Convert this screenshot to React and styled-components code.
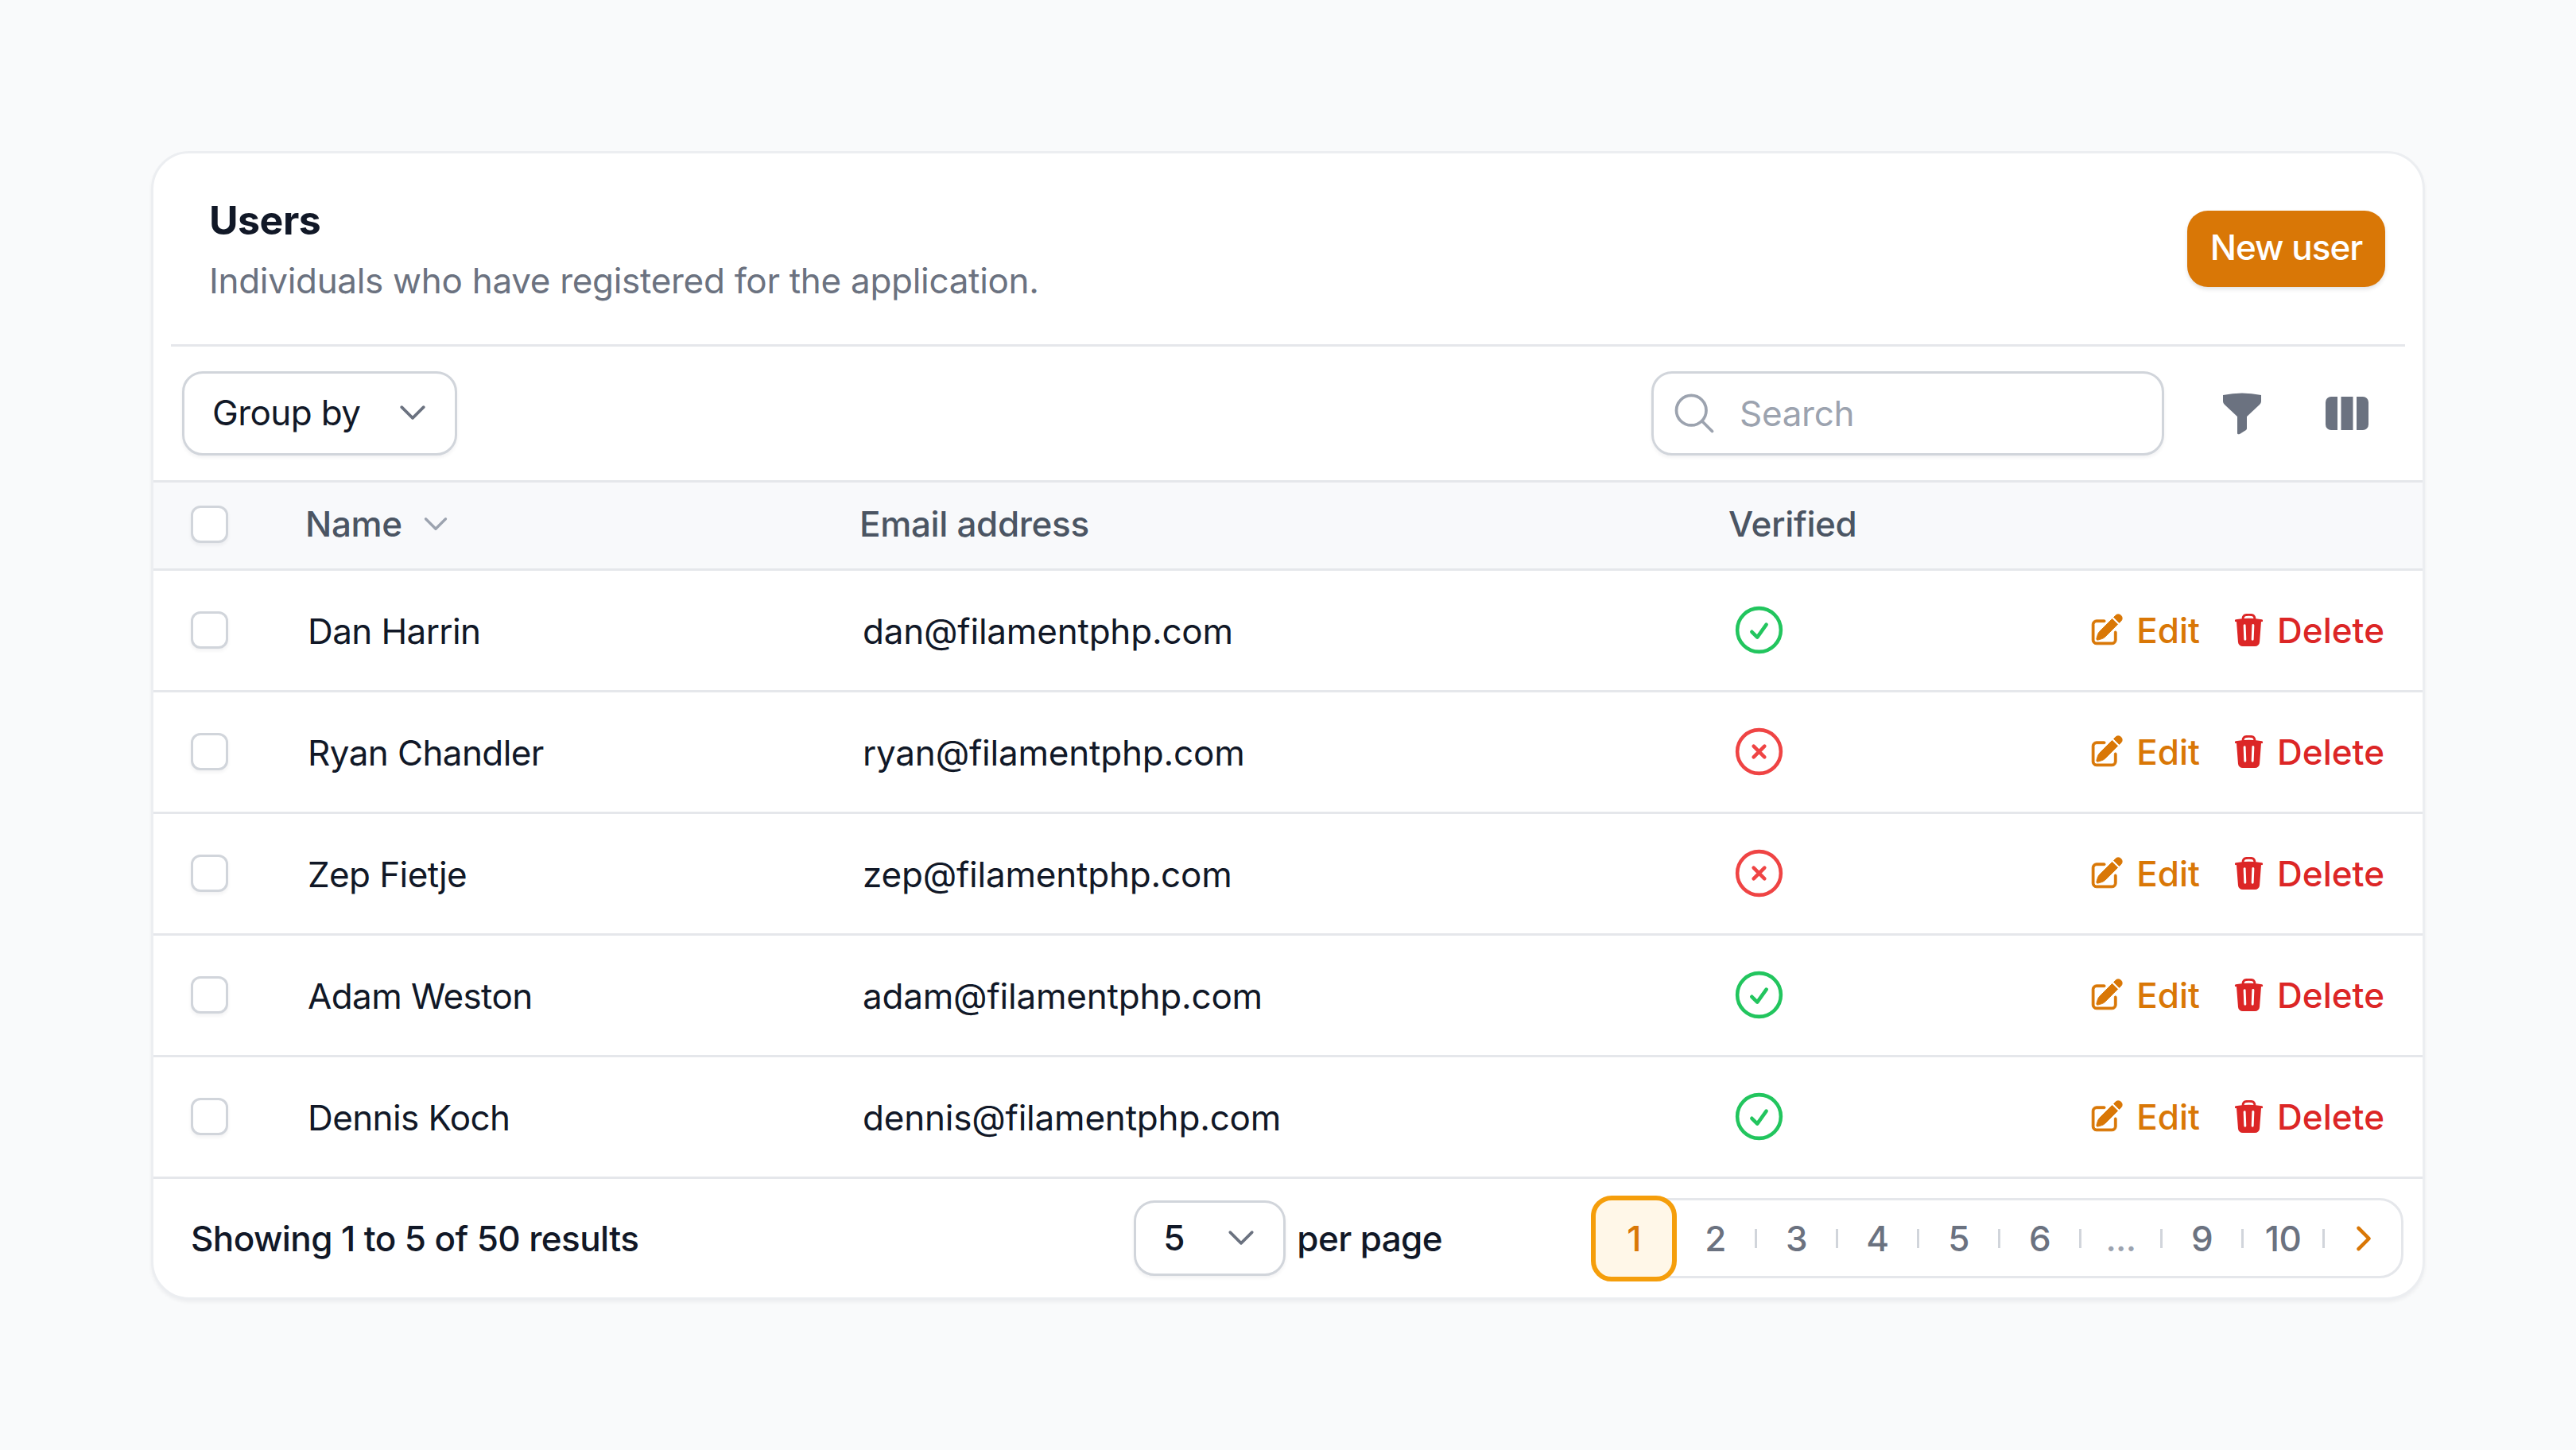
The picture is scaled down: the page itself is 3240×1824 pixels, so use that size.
import React from "react";
import styled, { createGlobalStyle } from "styled-components";

const GlobalStyle = createGlobalStyle`
  * { box-sizing: border-box; }
  body {
    margin: 0;
    background: #f9fafb;
    font-family: "Inter", "Liberation Sans", sans-serif;
    color: #111827;
  }
`;

const Page = styled.div`
  min-height: 100vh;
  display: flex;
  align-items: center;
  justify-content: center;
`;

const Card = styled.section`
  width: 2860px;
  height: 1445px;
  background: #fff;
  border: 3px solid #eceef1;
  border-radius: 48px;
  box-shadow: 0 3px 4px rgba(17, 24, 39, 0.05);
  overflow: hidden;
`;

const Header = styled.header`
  height: 243px;
  margin: 0 22px;
  padding: 0 25px 0 48px;
  border-bottom: 3px solid #e5e7eb;
  display: flex;
  align-items: center;
  justify-content: space-between;
`;

const Title = styled.h1`
  margin: 2px 0 18px;
  font-size: 50px;
  line-height: 60px;
  font-weight: 700;
  letter-spacing: -0.5px;
`;

const Subtitle = styled.p`
  margin: 0;
  font-size: 44px;
  line-height: 56px;
  color: #6b7280;
  letter-spacing: -0.3px;
`;

const PrimaryButton = styled.button`
  width: 249px;
  height: 96px;
  border: none;
  border-radius: 26px;
  background: #d97706;
  color: #fff;
  font: 500 44px/92px "Inter", sans-serif;
  letter-spacing: -1px;
  box-shadow: 0 3px 5px rgba(17, 24, 39, 0.12);
  padding: 0 0 4px;
`;

const Toolbar = styled.div`
  height: 168px;
  padding: 0 68px 0 36px;
  display: flex;
  align-items: center;
`;

const Select = styled.div`
  width: ${(p) => p.$width}px;
  height: ${(p) => p.$height}px;
  padding: 0 ${(p) => p.$right}px 2px ${(p) => p.$left}px;
  border: 3px solid #d1d5db;
  border-radius: 26px;
  background: #fff;
  box-shadow: 0 3px 4px rgba(17, 24, 39, 0.05);
  display: flex;
  align-items: center;
  justify-content: space-between;
  font-size: 44px;
  letter-spacing: -0.6px;
`;

const SearchBox = styled.label`
  width: 645px;
  height: 106px;
  margin-left: auto;
  padding: 0 21px;
  border: 3px solid #d1d5db;
  border-radius: 26px;
  box-shadow: 0 3px 4px rgba(17, 24, 39, 0.05);
  display: flex;
  align-items: center;
  gap: 27px;
`;

const SearchInput = styled.input`
  flex: 1;
  min-width: 0;
  border: none;
  outline: none;
  padding: 0;
  font: 400 44px "Inter", sans-serif;
  letter-spacing: -0.3px;
  &::placeholder {
    color: #9ca3af;
    opacity: 1;
  }
`;

const ToolIcons = styled.div`
  margin-left: 74px;
  display: flex;
  align-items: center;
  gap: 81px;
  color: #6b7280;
`;

const TableHead = styled.div`
  height: 114px;
  padding: 0 0 3px 47px;
  background: #f8f9fb;
  border-top: 3px solid #e5e7eb;
  border-bottom: 3px solid #e5e7eb;
  display: grid;
  grid-template-columns: 144px 697px 1093px 1fr;
  align-items: center;
  font-size: 44px;
  font-weight: 500;
  letter-spacing: -0.35px;
  color: #4b5563;
`;

const SortLabel = styled.span`
  display: flex;
  align-items: center;
  gap: 22px;
  color: #4b5563;
`;

const Row = styled.div`
  height: 153px;
  padding: 0 48px 0 47px;
  border-bottom: 3px solid #e5e7eb;
  display: grid;
  grid-template-columns: 147px 698px 1091px 73px 1fr;
  align-items: center;
  font-size: 44px;
  letter-spacing: -0.6px;
`;

const Checkbox = styled.input.attrs({ type: "checkbox" })`
  appearance: none;
  width: 47px;
  height: 47px;
  margin: 0;
  background: #fff;
  border: 3px solid #d1d5db;
  border-radius: 12px;
  box-shadow: 0 3px 4px rgba(17, 24, 39, 0.05);
`;

const Cell = styled.span`
  padding-top: 3px;
`;

const EmailCell = styled(Cell)`
  letter-spacing: -0.2px;
`;

const StatusIcon = styled.svg`
  display: block;
  width: 73px;
  height: 73px;
  color: ${(p) => (p.$ok ? "#22c55e" : "#ef4444")};
`;

const Actions = styled.div`
  display: flex;
  justify-content: flex-end;
  gap: 38px;
`;

const ActionLink = styled.a`
  display: flex;
  align-items: center;
  gap: ${(p) => p.$gap}px;
  color: ${(p) => p.$color};
  font-weight: 500;
  letter-spacing: 0;
`;

const Footer = styled.footer`
  height: 150px;
  padding: 0 24px 0 47px;
  display: flex;
  align-items: center;
  font-size: 44px;
  font-weight: 500;
  letter-spacing: -0.6px;
`;

const Results = styled.span`
  flex: 1;
`;

const PerPage = styled.div`
  margin-right: 187px;
  display: flex;
  align-items: center;
  gap: 14px;
`;

const Pagination = styled.nav`
  width: 1022px;
  height: 101px;
  border: 3px solid #e5e7eb;
  border-radius: 30px;
  display: flex;
  align-items: center;
`;

const ActivePage = styled.span`
  width: 108px;
  height: 108px;
  margin: 0 -1px 0 -3px;
  flex: none;
  border: 6px solid #f59e0b;
  border-radius: 26px;
  background: #fff7e8;
  color: #d97706;
  display: flex;
  align-items: center;
  justify-content: center;
  font-size: 44px;
  font-weight: 500;
`;

const PageCell = styled.span`
  width: 99px;
  flex: none;
  text-align: center;
  color: ${(p) => (p.$muted ? "#9ca3af" : "#6b7280")};
  font-weight: 500;
`;

const PageSeparator = styled.i`
  width: 3px;
  height: 24px;
  flex: none;
  background: #d1d5db;
`;

const NextCell = styled.span`
  flex: 1;
  padding-left: 2px;
  display: flex;
  justify-content: center;
  color: #d97706;
`;

const Chevron = ({ size = 44, width = 2, color = "#6b7280" }) => (
  <svg width={size} height={size} viewBox="0 0 24 24" fill="none" stroke={color} strokeWidth={width} strokeLinecap="round" strokeLinejoin="round">
    <path d="m19.5 8.25-7.5 7.5-7.5-7.5" />
  </svg>
);

const SearchIcon = () => (
  <svg width="60" height="60" viewBox="0 0 24 24" fill="none" stroke="#9ca3af" strokeWidth="1.5" strokeLinecap="round" strokeLinejoin="round">
    <path d="m21 21-5.197-5.197m0 0A7.5 7.5 0 105.196 5.196a7.5 7.5 0 0010.607 10.607z" />
  </svg>
);

const FunnelIcon = () => (
  <svg width="48" height="54" viewBox="0 0 48 54" fill="currentColor">
    <path d="M0 4Q24-1 48 4V12Q48 14 46 16L30 31V46Q30 47 29 48L21 53Q18 54 18 52V31L2 16Q0 14 0 12Z" />
  </svg>
);

const ColumnsIcon = () => (
  <svg width="54" height="42" viewBox="0 0 54 42" fill="currentColor">
    <path d="M15 0H7a7 7 0 00-7 7V35a7 7 0 007 7H15ZM19.500 0H34.500V42H19.500ZM39 0H47a7 7 0 017 7V35a7 7 0 01-7 7H39Z" />
  </svg>
);

const Verified = ({ ok }) => (
  <StatusIcon $ok={ok} viewBox="0 0 24 24" fill="none" stroke="currentColor" strokeWidth="1.5" strokeLinecap="round" strokeLinejoin="round">
    <path d={ok ? "M9 12.75 11.25 15 15 9.75M21 12a9 9 0 11-18 0 9 9 0 0118 0z" : "m9.75 9.75 4.5 4.5m0-4.5-4.5 4.5M21 12a9 9 0 11-18 0 9 9 0 0118 0z"} />
  </StatusIcon>
);

const EditIcon = () => (
  <svg width="45" height="45" viewBox="0 0 24 24" fill="currentColor" stroke="currentColor" strokeWidth="0.5">
    <path d="M21.731 2.269a2.625 2.625 0 00-3.712 0l-1.157 1.157 3.712 3.712 1.157-1.157a2.625 2.625 0 000-3.712zM19.513 8.199l-3.712-3.712-8.4 8.4a5.25 5.25 0 00-1.32 2.214l-.8 2.685a.75.75 0 00.933.933l2.685-.8a5.25 5.25 0 002.214-1.32l8.4-8.4z" />
    <path d="M5.25 5.25a3 3 0 00-3 3v10.5a3 3 0 003 3h10.5a3 3 0 003-3V13.5a.75.75 0 00-1.5 0v5.25a1.5 1.5 0 01-1.5 1.5H5.25a1.5 1.5 0 01-1.5-1.5V8.25a1.5 1.5 0 011.5-1.5h5.25a.75.75 0 000-1.5H5.25z" />
  </svg>
);

const TrashIcon = () => (
  <svg width="47" height="47" viewBox="0 0 24 24" fill="currentColor">
    <path fillRule="evenodd" clipRule="evenodd" d="M16.5 4.478v.227a48.816 48.816 0 013.878.512.75.75 0 11-.256 1.478l-.209-.035-1.005 13.07a3 3 0 01-2.991 2.77H8.084a3 3 0 01-2.991-2.77L4.087 6.66l-.209.035a.75.75 0 01-.256-1.478A48.567 48.567 0 017.5 4.705v-.227c0-1.564 1.213-2.9 2.816-2.951a52.662 52.662 0 013.369 0c1.603.051 2.815 1.387 2.815 2.951zm-6.136-1.452a51.196 51.196 0 013.273 0C14.39 3.05 15 3.684 15 4.478v.113a49.488 49.488 0 00-6 0v-.113c0-.794.609-1.428 1.364-1.452zm-.355 5.945a.75.75 0 10-1.5.058l.347 9a.75.75 0 101.499-.058l-.346-9zm5.48.058a.75.75 0 10-1.498-.058l-.347 9a.75.75 0 001.5.058l.345-9z" />
  </svg>
);

const users = [
  { name: "Dan Harrin", email: "dan@filamentphp.com", verified: true },
  { name: "Ryan Chandler", email: "ryan@filamentphp.com", verified: false },
  { name: "Zep Fietje", email: "zep@filamentphp.com", verified: false },
  { name: "Adam Weston", email: "adam@filamentphp.com", verified: true },
  { name: "Dennis Koch", email: "dennis@filamentphp.com", verified: true },
];

const pages = ["2", "3", "4", "5", "6", "...", "9", "10"];

export default function App() {
  return (
    <Page>
      <GlobalStyle />
      <Card>
        <Header>
          <div>
            <Title>Users</Title>
            <Subtitle>Individuals who have registered for the application.</Subtitle>
          </div>
          <PrimaryButton>New user</PrimaryButton>
        </Header>

        <Toolbar>
          <Select $width={346} $height={106} $left={35} $right={31}>
            Group by
            <Chevron />
          </Select>
          <SearchBox>
            <SearchIcon />
            <SearchInput placeholder="Search" />
          </SearchBox>
          <ToolIcons>
            <FunnelIcon />
            <ColumnsIcon />
          </ToolIcons>
        </Toolbar>

        <TableHead>
          <Checkbox />
          <SortLabel>
            Name
            <Chevron size={40} color="#9ca3af" />
          </SortLabel>
          <span>Email address</span>
          <span>Verified</span>
        </TableHead>

        {users.map((user) => (
          <Row key={user.email}>
            <Checkbox />
            <Cell>{user.name}</Cell>
            <EmailCell>{user.email}</EmailCell>
            <Verified ok={user.verified} />
            <Actions>
              <ActionLink $color="#d97706" $gap={15}>
                <EditIcon />
                Edit
              </ActionLink>
              <ActionLink $color="#dc2626" $gap={12}>
                <TrashIcon />
                Delete
              </ActionLink>
            </Actions>
          </Row>
        ))}

        <Footer>
          <Results>Showing 1 to 5 of 50 results</Results>
          <PerPage>
            <Select $width={191} $height={95} $left={34} $right={31}>
              5
              <Chevron />
            </Select>
            per page
          </PerPage>
          <Pagination>
            <ActivePage>1</ActivePage>
            {pages.map((page) => (
              <React.Fragment key={page}>
                <PageCell $muted={page === "..."}>{page}</PageCell>
                <PageSeparator />
              </React.Fragment>
            ))}
            <NextCell>
              <svg width="42" height="42" viewBox="0 0 24 24" fill="none" stroke="currentColor" strokeWidth="2.6" strokeLinecap="round" strokeLinejoin="round">
                <path d="m8.25 4.5 7.5 7.5-7.5 7.500" />
              </svg>
            </NextCell>
          </Pagination>
        </Footer>
      </Card>
    </Page>
  );
}
